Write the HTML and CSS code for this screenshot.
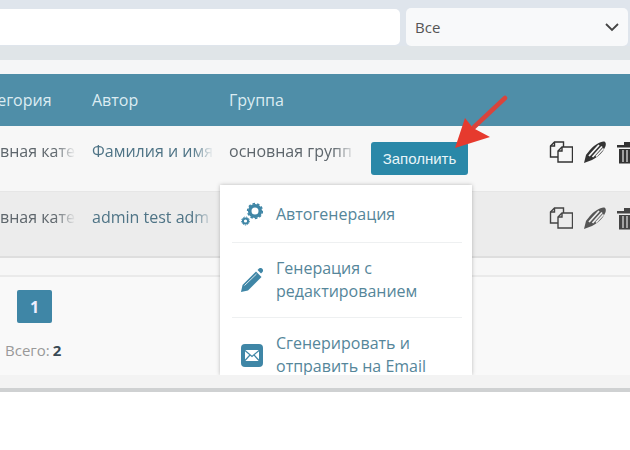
FILE: index.html
```html
<!DOCTYPE html>
<html lang="ru">
<head>
<meta charset="utf-8">
<title>Документы</title>
<link rel="stylesheet" href="styles.css">
</head>
<body>
<div class="panel">
  <div class="filters">
    <div class="search"></div>
    <div class="select"><span>Все</span>
      <svg class="chev" width="14" height="9" viewBox="0 0 14 9"><path d="M1 1l6 6 6-6" fill="none" stroke="#444" stroke-width="1.8"/></svg>
    </div>
  </div>
  <div class="gap"></div>
  <div class="thead row-grid">
    <div class="cut"><span class="shift-h">Категория</span></div>
    <div>Автор</div>
    <div>Группа</div>
  </div>
  <div class="row row-grid">
    <div class="cell cut-cat"><span class="shift">основная катег</span></div>
    <div class="cell fade">Фамилия и имя</div>
    <div class="cell fade">основная групп</div>
    <div class="btn-cell"><button class="fill">Заполнить</button></div>
    <div class="actions">
      <svg class="ic" width="24" height="22" viewBox="0 0 24 22"><g fill="none" stroke="#333" stroke-width="1.4"><path d="M9 16H1.500V5L5.500 1H14.500V6"/><path d="M5.500 1V5H1.500"/><path d="M13 6H23.500V21H9V10Z"/><path d="M13 6V10H9"/></g></svg>
      <svg class="ic" width="24" height="23" viewBox="0 0 24 23"><path d="M1 22L3 14C6 10 10 5 14 3C17 1 21 0 22 1C24 3 22 7 20 10C17 14 13 17 9 19Z" fill="#333"/><path d="M6 15L16 4M9.500 16L19 5.500M13 15.500L20.500 7.500" stroke="#f7f7f7" stroke-width="1.800" fill="none"/></svg>
      <svg class="ic" width="20" height="23" viewBox="0 0 20 23"><path d="M0 4h20v2.500H0zM7 1h6v3H7z" fill="#333"/><path d="M2 8h16v14.500H2z" fill="#333"/><path d="M6 9v12M10 9v12M14 9v12" stroke="#bbb" stroke-width="1.600"/></svg>
    </div>
  </div>
  <div class="row row-alt row-grid">
    <div class="cell cut-cat alt"><span class="shift">основная катег</span></div>
    <div class="cell fade">admin test adm</div>
    <div></div>
    <div></div>
    <div class="actions">
      <svg class="ic" width="24" height="22" viewBox="0 0 24 22"><g fill="none" stroke="#444" stroke-width="1.4"><path d="M9 16H1.500V5L5.500 1H14.500V6"/><path d="M5.500 1V5H1.500"/><path d="M13 6H23.500V21H9V10Z"/><path d="M13 6V10H9"/></g></svg>
      <svg class="ic" width="24" height="23" viewBox="0 0 24 23"><path d="M1 22L3 14C6 10 10 5 14 3C17 1 21 0 22 1C24 3 22 7 20 10C17 14 13 17 9 19Z" fill="#555"/><path d="M6 15L16 4M9.500 16L19 5.500M13 15.500L20.500 7.500" stroke="#ececec" stroke-width="1.800" fill="none"/></svg>
      <svg class="ic" width="20" height="23" viewBox="0 0 20 23"><path d="M0 4h20v2.500H0zM7 1h6v3H7z" fill="#444"/><path d="M2 8h16v14.500H2z" fill="#444"/><path d="M6 9v12M10 9v12M14 9v12" stroke="#bbb" stroke-width="1.600"/></svg>
    </div>
  </div>
  <div class="strip"></div>
  <div class="pager">
    <div class="page">1</div>
    <div class="total">Всего: <b>2</b></div>
  </div>
  <div class="foot"></div>

  <div class="menu">
    <div class="item one">
      <svg width="22" height="24" viewBox="0 0 22 24"><circle cx="14" cy="9" r="5.300" fill="none" stroke="#3f86a6" stroke-width="3.600"/><circle cx="14" cy="9" r="7.400" fill="none" stroke="#3f86a6" stroke-width="1.500" stroke-dasharray="2.500 2.100"/><circle cx="4.500" cy="19" r="2.600" fill="none" stroke="#3f86a6" stroke-width="2"/><circle cx="4.500" cy="19" r="4" fill="none" stroke="#3f86a6" stroke-width="1" stroke-dasharray="1.400 1.300"/></svg>
      <span class="one-label">Автогенерация</span>
    </div>
    <div class="item">
      <svg width="22" height="24" viewBox="0 0 22 24"><path d="M0 24l1.500-7L15 3.500l5.500 5.500L7 22.500z" fill="#3f86a6"/><path d="M16.500 2l1.500-1.500c1-.8 2-.8 3 0l.5.500c.8 1 .8 2 0 3L20 5.500z" fill="#3f86a6"/><path d="M3.500 17.500L15.500 6" stroke="#fff" stroke-width=".8" fill="none"/></svg>
      <span>Генерация с<br>редактированием</span>
    </div>
    <div class="item">
      <svg width="22" height="23" viewBox="0 0 22 23"><rect width="22" height="23" rx="4" fill="#3f86a6"/><rect x="4" y="6" width="14" height="11" rx="1" fill="#fff"/><path d="M4 6.500l7 6 7-6M4 16.500l5-5.500M18 16.500l-5-5.500" fill="none" stroke="#3f86a6" stroke-width="1.200"/></svg>
      <span>Сгенерировать и<br>отправить на Email</span>
    </div>
  </div>

  <svg class="arrow" width="56" height="60" viewBox="0 0 56 60"><path d="M52 3L20 33" stroke="#d9443c" stroke-width="4.500" stroke-linecap="round"/><path d="M2 53L12 23l8 10 17 9z" fill="#e63a2e"/></svg>
</div>
</body>
</html>
```
FILE: styles.css
```css
* { box-sizing: border-box; }
html, body { margin: 0; padding: 0; background: #fff; }
body { width: 630px; height: 450px; overflow: hidden; font-family: "Open Sans", "Noto Sans", sans-serif; font-size: 16px; color: #555; }

.panel { position: relative; width: 630px; height: 392px; background: #f9f9f9; border-bottom: 4px solid #cfd1d2; overflow: hidden; display: flex; flex-direction: column; }

.filters { height: 46px; background: #dfe5ec; display: flex; align-items: flex-end; gap: 6px; }
.search { width: 400px; height: 36px; background: #fff; border-radius: 0 5px 5px 0; margin-bottom: 1px; }
.select { width: 222px; height: 38px; background: #f8f9fa; border-radius: 5px; padding: 0 9px; display: flex; align-items: center; justify-content: space-between; color: #555; margin-right: 2px; font-size: 15px; }

.gap { height: 28px; flex: none; background: linear-gradient(#e0e5e8 0 14px, #f5f6f7 14px); }

.row-grid { display: grid; grid-template-columns: 92px 137px 142px 178px 81px; }
.thead { height: 52px; flex: none; background: #4f8ea8; color: #dcecf2; font-weight: 400; align-items: center; }
.cut { overflow: hidden; white-space: nowrap; }
.shift-h { display: block; margin-left: -29px; }

.row { height: 66px; flex: none; background: #f7f7f7; border-bottom: 1px solid #e6e6e6; }
.row-alt { background: #ececec; border-bottom: 2px solid #dedede; }
.cell { padding-top: 14px; white-space: nowrap; overflow: hidden; color: #5e666c; }
.fade { margin-right: 15px; -webkit-mask-image: linear-gradient(90deg, #000 82%, transparent); mask-image: linear-gradient(90deg, #000 82%, transparent); }
.cut-cat { margin-right: 16px; -webkit-mask-image: linear-gradient(90deg, #000 72%, transparent); mask-image: linear-gradient(90deg, #000 72%, transparent); }
.shift { display: block; margin-left: -37px; }
.row-grid > .fade:nth-child(2) { color: #4f7486; }

.btn-cell { padding-top: 16px; }
.fill { width: 97px; height: 33px; border: 0; border-radius: 3px; background: #2a88a8; color: #e8f5f8; font: 400 15px "Liberation Sans", sans-serif; padding: 0; }

.actions { display: flex; gap: 10px; padding-top: 15px; align-items: flex-start; }
.ic { flex: none; }

.strip { height: 19px; flex: none; background: #f7f7f7; border-bottom: 2px solid #eaeaea; }
.pager { flex: 1; padding: 13px 0 0 5px; }
.page { margin-left: 12px; width: 35px; height: 33px; background: #3f86a6; color: #eef; border-radius: 2px; font-weight: 700; display: flex; align-items: center; justify-content: center; }
.total { margin-top: 17px; font-size: 15px; color: #999; word-spacing: -1px; }
.total b { color: #3a4a55; }
.foot { height: 13px; flex: none; background: #f3f3f3; position: relative; z-index: 1; }

.menu { position: absolute; left: 220px; top: 185px; width: 252px; height: 190px; background: #fff; box-shadow: 0 0 4px rgba(0,0,0,.25); padding: 0 10px 0 12px; overflow: hidden; color: #55869a; line-height: 23px; }
.item { display: flex; align-items: center; gap: 13px; padding: 0 9px; height: 75px; border-bottom: 1px solid #eef0f1; }
.item svg { flex: none; }
.item.one { height: 58px; }
.one-label { padding-top: 2px; }

.arrow { position: absolute; left: 453px; top: 95px; }
```
